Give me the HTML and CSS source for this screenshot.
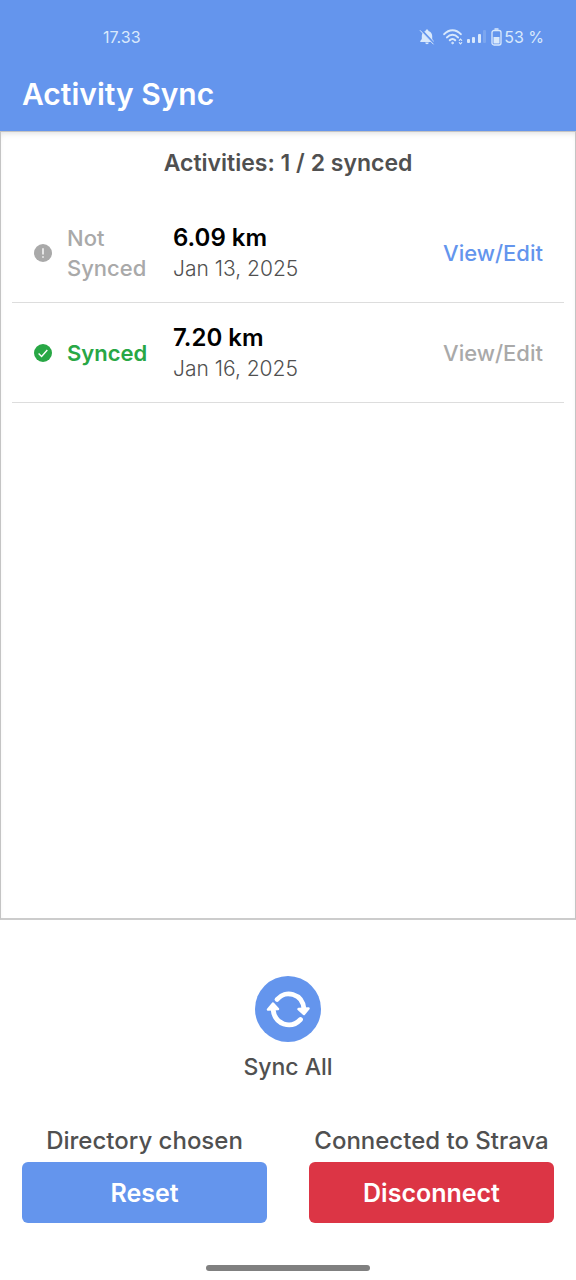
FILE: index.html
```html
<!DOCTYPE html>
<html lang="en">
<head>
<meta charset="utf-8">
<meta name="viewport" content="width=device-width, initial-scale=1">
<title>Activity Sync</title>
<link rel="stylesheet" href="styles.css">
</head>
<body>
<div class="app">
  <header class="header">
    <div class="status-bar">
      <time>17.33</time>
      <div class="status-icons">
        <svg class="bell" width="16" height="16" viewBox="0 0 16 16" aria-hidden="true"><path d="M8 .5c.9 0 1.400.6 1.400 1.400C12 2.600 13.200 4.600 13.200 7v3l1.500 2v1H1.300v-1l1.500-2V7c0-2.400 1.200-4.400 3.800-5.100C6.600 1.100 7.100.5 8 .5zM6.300 13.600h3.400c0 1-.7 1.700-1.700 1.700s-1.700-.7-1.700-1.700z" fill="currentColor"/><path d="M2.200.8l13 14" class="bell-gap"/><path d="M1 1.300l13.500 14" class="bell-slash"/></svg>
        <svg class="wifi" width="20" height="16" viewBox="0 0 20 16" fill="none" stroke="currentColor" stroke-width="2" stroke-linecap="round" aria-hidden="true"><path d="M1.200 5.200C6-.2 13-.2 17.800 5.200M4 8.400c3.200-3.500 7.800-3.500 11 0M6.800 11.300c1.600-1.700 3.800-1.700 5.400 0"/><circle cx="9.500" cy="14" r=".8" fill="currentColor" stroke-width="1"/><path d="M16.300 11.400l1.200-1.200 1.200 1.200M16.300 13.600l1.200 1.200 1.200-1.200" stroke-width="1.200"/></svg>
        <svg class="signal" width="20" height="14" viewBox="0 0 20 14" fill="currentColor" aria-hidden="true"><rect y="9" width="3" height="4" rx="1"/><rect x="5" y="7" width="3" height="6" rx="1"/><rect x="11" y="4" width="3" height="9" rx="1"/><rect x="16" width="3" height="13" rx="1" opacity=".2"/></svg>
        <svg class="battery" width="11" height="18" viewBox="0 0 11 18" aria-hidden="true"><path d="M3.500 1h4" stroke="currentColor" stroke-width="1.500"/><rect x="1" y="2.500" width="9" height="14.500" rx="2" fill="none" stroke="currentColor" stroke-width="1.300"/><rect x="2.500" y="9" width="6" height="6.500" fill="currentColor"/></svg>
        <span>53 %</span>
      </div>
    </div>
    <h1 class="title">Activity Sync</h1>
  </header>
  <main class="activities">
    <h2 class="summary">Activities: 1 / 2 synced</h2>
    <ul class="list">
      <li class="row">
        <svg class="state-icon pending" viewBox="0 0 18 18" aria-hidden="true"><circle cx="9" cy="9" r="9" fill="currentColor"/><path d="M9 4.200v6.200M9 12.200v1.500" stroke="#fff" stroke-width="1.400"/></svg>
        <span class="state pending">Not Synced</span>
        <div class="details"><strong class="distance">6.09 km</strong><span class="date">Jan 13, 2025</span></div>
        <button class="edit" type="button">View/Edit</button>
      </li>
      <li class="row">
        <svg class="state-icon done" viewBox="0 0 18 18" aria-hidden="true"><circle cx="9" cy="9" r="9" fill="currentColor"/><path d="M4.600 9.500l3 3L13.300 6" fill="none" stroke="#fff" stroke-width="1.400"/></svg>
        <span class="state done">Synced</span>
        <div class="details"><strong class="distance">7.20 km</strong><span class="date">Jan 16, 2025</span></div>
        <button class="edit" type="button" disabled>View/Edit</button>
      </li>
    </ul>
  </main>
  <footer class="footer">
    <button class="sync" type="button">
      <svg class="sync-icon" viewBox="0 0 66 66" aria-hidden="true"><circle cx="33" cy="33" r="33" fill="#6495ed"/><g fill="none" stroke="#fff" stroke-width="4.800" stroke-linecap="round"><path d="M22 23.500C30 13.500 47.500 17 49 33"/><path d="M45.500 43.500C36 53.500 19.500 49 18 33"/></g><g fill="#fff" stroke="#fff" stroke-width="2.500" stroke-linejoin="round"><path d="M43.500 33l10-.5-4.500 5.500z"/><path d="M13 33.500l10-.5-5-5.500z"/></g></svg>
      <span>Sync All</span>
    </button>
    <div class="connections">
      <section class="connection"><p class="connection-label">Directory chosen</p><button class="action reset" type="button">Reset</button></section>
      <section class="connection"><p class="connection-label">Connected to Strava</p><button class="action disconnect" type="button">Disconnect</button></section>
    </div>
    <div class="home-bar"></div>
  </footer>
</div>
</body>
</html>
```
FILE: styles.css
```css
* { box-sizing: border-box; }
body { margin: 0; background: #fff; color: #505050; font-family: Inter, "Noto Sans", sans-serif; }
h1, h2, p, ul { margin: 0; padding: 0; }
button { padding: 0; border: 0; background: none; font: inherit; color: inherit; cursor: pointer; }
.app { min-height: 100vh; display: flex; flex-direction: column; }
.header { padding: 24px 22px 16px; background: #6495ed; color: #fff; }
.status-bar { display: flex; justify-content: space-between; align-items: center; height: 26px; padding: 0 10px 0 81px; color: #d9e9fc; font-size: 16px; }
.status-icons { display: flex; align-items: center; }
.bell { margin-right: 8px; }
.bell-gap { stroke: #6495ed; stroke-width: 2; }
.bell-slash { stroke: currentColor; stroke-width: 1; }
.wifi { margin-right: 4px; }
.signal { margin-right: 4px; }
.battery { margin-right: 2px; }
.title { margin-top: 24px; font-size: 30px; line-height: 41px; font-weight: 600; }
.activities { flex: 1; border: 1px solid #c4c4c4; border-bottom-width: 2px; border-bottom-color: #ccc; padding: 13px 11px; box-shadow: inset 0 4px 6px -3px #ddd; }
.summary { font-size: 23px; line-height: 36px; font-weight: 600; text-align: center; }
.list { list-style: none; margin-top: 22px; }
.row { display: flex; align-items: center; height: 100px; padding: 0 21px 0 22px; border-bottom: 1px solid #ddd; font-size: 22px; }
.state-icon { flex: none; width: 18px; height: 18px; margin-right: 15px; }
.state { width: 90px; margin-right: 16px; line-height: 30px; font-weight: 500; }
.pending { color: #a9a9a9; }
.done { color: #28a745; }
.state.done { font-weight: 600; }
.details { flex: 1; display: flex; flex-direction: column; }
.distance { color: #000; font-size: 24px; line-height: 33px; font-weight: 600; }
.date { font-size: 21px; line-height: 30px; font-weight: 300; }
.edit { color: #6495ed; font-weight: 500; }
.edit:disabled { color: #a9a9a9; cursor: default; }
.footer { display: flex; flex-direction: column; align-items: center; padding: 56px 22px 9px; }
.sync { display: flex; flex-direction: column; align-items: center; font-size: 23px; line-height: 32px; font-weight: 500; }
.sync-icon { width: 66px; height: 66px; margin-bottom: 9px; }
.connections { align-self: stretch; display: grid; grid-template-columns: 1fr 1fr; gap: 42px; margin-top: 42px; }
.connection-label { margin-bottom: 5px; font-size: 24px; line-height: 32px; font-weight: 500; text-align: center; white-space: nowrap; }
.action { width: 100%; height: 61px; border-radius: 6px; color: #fff; font-size: 25px; font-weight: 600; }
.reset { background: #6495ed; }
.disconnect { background: #dc3545; }
.home-bar { width: 164px; height: 6px; margin-top: 42px; border-radius: 3px; background: #808080; }
```
